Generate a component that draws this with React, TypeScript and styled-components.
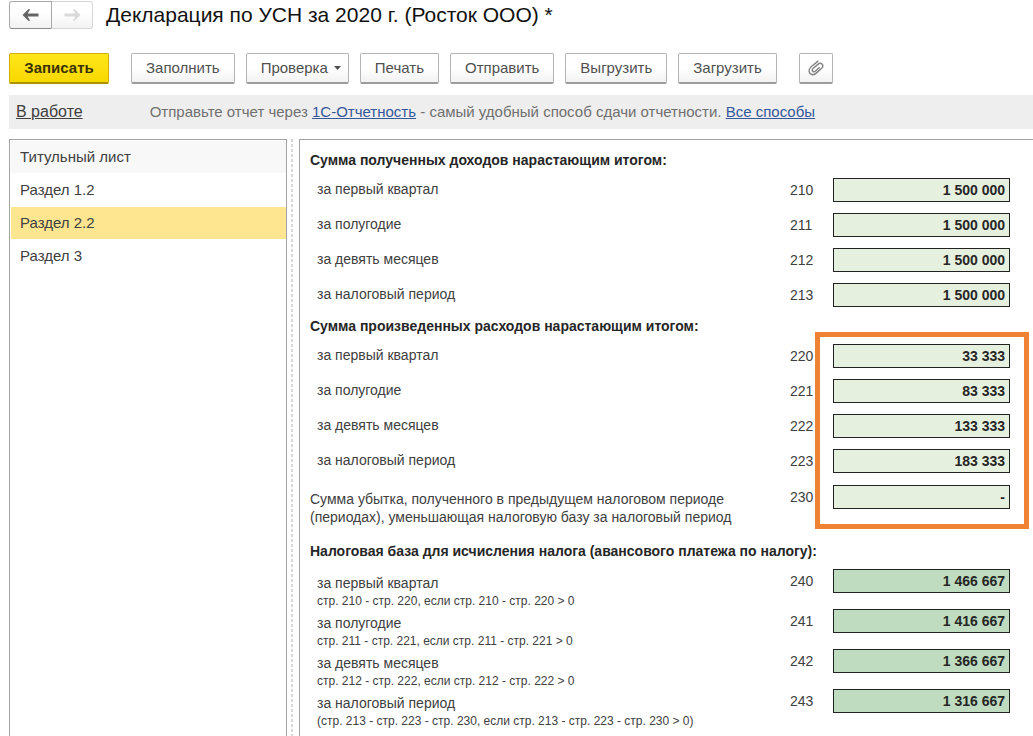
import React from 'react';
import styled, { createGlobalStyle, css } from 'styled-components';

const GlobalStyle = createGlobalStyle`
  * {
    box-sizing: border-box;
  }
  body {
    margin: 0;
    background: #fff;
    color: #404040;
    font-family: "Liberation Sans", Arial, sans-serif;
    font-size: 14px;
  }
  button,
  input {
    font-family: inherit;
  }
`;

const Page = styled.div`
  display: flex;
  flex-direction: column;
  min-height: 100vh;
  padding-left: 9px;
`;

const Header = styled.header`
  display: flex;
  align-items: center;
  gap: 13px;
  height: 30px;
`;

const History = styled.div`
  display: flex;
`;

const HistoryButton = styled.button<{ $side: 'left' | 'right' }>`
  display: flex;
  align-items: center;
  justify-content: center;
  width: ${(p) => (p.$side === 'left' ? 43 : 41)}px;
  height: 28px;
  padding: 0;
  border: 1px solid #a8a8a8;
  border-bottom-color: #8e8e8e;
  border-radius: 3px 0 0 3px;
  background: linear-gradient(#fff 40%, #f2f2f2);
  color: #666;
  ${(p) =>
    p.$side === 'right' &&
    css`
      border-color: #d6d6d6;
      border-left: 0;
      border-radius: 0 3px 3px 0;
      color: #dadada;
    `}
`;

const Title = styled.h1`
  margin: 0;
  color: #111;
  font-size: 21px;
  font-weight: 400;
  line-height: 28px;
`;

const Toolbar = styled.div`
  display: flex;
  gap: 22px;
  padding-top: 23px;
`;

const ButtonGroup = styled.div`
  display: flex;
  gap: 11px;
`;

const ToolButton = styled.button<{ $primary?: boolean; $menu?: boolean }>`
  display: flex;
  align-items: center;
  justify-content: center;
  gap: 6px;
  height: 31px;
  padding: 0 ${(p) => (p.$menu ? 7 : 14)}px 0 14px;
  border: 1px solid #b4b4b4;
  border-bottom: 2px solid #9c9c9c;
  border-radius: 2px;
  background: linear-gradient(#fff 50%, #f2f2f2);
  color: #505050;
  font-size: 15px;
  line-height: 18px;
  ${(p) =>
    p.$primary &&
    css`
      min-width: 100px;
      border-color: #d0b000;
      border-bottom-color: #ac9200;
      background: linear-gradient(#ffe61a, #f8d800);
      color: #3a3300;
      font-weight: 700;
    `}
`;

const AttachButton = styled(ToolButton)`
  width: 34px;
  padding: 0;
`;

const StatusBar = styled.div`
  display: flex;
  align-items: center;
  gap: 67px;
  height: 34px;
  margin-top: 11px;
  padding: 0 0 1px 7px;
  background: #eee;
`;

const StatusLink = styled.a`
  color: #404040;
  font-size: 16px;
`;

const Notice = styled.p`
  margin: 0;
  color: #707070;
  font-size: 15px;
`;

const NoticeLink = styled.a`
  color: #35589a;
`;

const Workspace = styled.div`
  display: flex;
  flex: 1;
  margin-top: 10px;
`;

const Sections = styled.nav`
  flex: none;
  width: 278px;
  padding: 1px 0 0 1px;
  border: 1px solid #a3a3a3;
  border-bottom: 0;
`;

const SectionButton = styled.button<{ $tone?: 'plain' | 'first' | 'active' }>`
  display: block;
  width: 100%;
  height: 33px;
  padding: 0 9px 1px;
  border: 0;
  border-bottom: 1px solid #fff;
  background: ${(p) =>
    p.$tone === 'active' ? '#fee590' : p.$tone === 'first' ? '#f8f8f8' : '#fff'};
  color: #404040;
  font-size: 15px;
  text-align: left;
`;

const Splitter = styled.div`
  flex: none;
  width: 12px;
  padding-left: 4px;

  &::before {
    content: '';
    display: block;
    width: 2px;
    height: 100%;
    background: repeating-linear-gradient(#d8d8d8 0 3px, #fff 3px 5px);
  }
`;

const Form = styled.main`
  flex: 1;
  min-width: 0;
  padding: 10px 23px 0 10px;
  border-top: 1px solid #a3a3a3;
  border-left: 1px solid #a3a3a3;
`;

const Heading = styled.h2`
  margin: 0 0 8px;
  color: #262626;
  font-size: 14px;
  font-weight: 700;
  line-height: 20px;
`;

const Rows = styled.div<{ $space: number }>`
  position: relative;
  display: flex;
  flex-direction: column;
  gap: 11px;
  margin-bottom: ${(p) => p.$space}px;
`;

const Highlight = styled.div`
  position: absolute;
  top: -12px;
  right: -19px;
  bottom: -2px;
  width: 214px;
  border: 5px solid #f08333;
  pointer-events: none;
`;

const Row = styled.div<{ $tall?: boolean }>`
  display: grid;
  grid-template-columns: 1fr 23px 177px;
  column-gap: 20px;
  height: ${(p) => (p.$tall ? 29 : 24)}px;
`;

const LossRow = styled(Row)`
  height: 42px;
  margin-top: 1px;
`;

const Label = styled.label<{ $drop?: boolean; $wide?: boolean }>`
  padding-top: ${(p) => (p.$drop ? 5 : 2)}px;
  padding-left: ${(p) => (p.$wide ? 0 : 7)}px;
  line-height: 18px;
  white-space: nowrap;
`;

const Formula = styled.small`
  display: block;
  font-size: 12px;
  line-height: 18px;
`;

const Code = styled.span`
  padding-top: 3px;
  line-height: 18px;
`;

const Amount = styled.input<{ $total?: boolean }>`
  width: 100%;
  height: 24px;
  padding: 0 4px;
  border: 1px solid #222;
  border-radius: 0;
  background: ${(p) => (p.$total ? '#bfdcc0' : '#e6f0de')};
  color: #262626;
  font-size: 14px;
  font-weight: 700;
  text-align: right;
`;

const Arrow = ({ back }: { back?: boolean }) => (
  <svg width="17" height="12" viewBox="0 0 17 12" fill="currentColor" aria-hidden="true">
    {back ? (
      <path d="M.5 6 6.300.3 8.200.3 5.700 4.600H16.500v2.800H5.700l2.500 4.300H6.300z" />
    ) : (
      <path d="M16.500 6 10.700.3H8.800l2.500 4.300H.5v2.800h10.800l-2.500 4.300h1.900z" />
    )}
  </svg>
);

const Caret = () => (
  <svg width="7" height="4" viewBox="0 0 7 4" aria-hidden="true">
    <path d="M0 0h7L3.500 4z" fill="#505050" />
  </svg>
);

const Clip = () => (
  <svg width="16" height="16" viewBox="0 0 16 16" fill="none" stroke="#858585" strokeWidth="1.5" strokeLinecap="round" aria-hidden="true">
    <path d="M9.800 1.300 3.400 6.500C.8 8.700.7 11.700 2 13.300c1.400 1.600 4 1.700 6.200-.2l4.900-4.300c1.800-1.600 2.100-3.300 1-4.600-1-1.200-2.700-1.100-4.200.2L5.300 8.300c-1.200 1-1.300 2.200-.6 2.900.6.800 1.700.7 2.800-.2l3.700-3.200" />
  </svg>
);

type Line = { code: string; label: string; value: string; formula?: string };

const income: Line[] = [
  { code: '210', label: 'за первый квартал', value: '1 500 000' },
  { code: '211', label: 'за полугодие', value: '1 500 000' },
  { code: '212', label: 'за девять месяцев', value: '1 500 000' },
  { code: '213', label: 'за налоговый период', value: '1 500 000' },
];

const expenses: Line[] = [
  { code: '220', label: 'за первый квартал', value: '33 333' },
  { code: '221', label: 'за полугодие', value: '83 333' },
  { code: '222', label: 'за девять месяцев', value: '133 333' },
  { code: '223', label: 'за налоговый период', value: '183 333' },
];

const taxBase: Line[] = [
  { code: '240', label: 'за первый квартал', value: '1 466 667', formula: 'стр. 210 - стр. 220, если стр. 210 - стр. 220 > 0' },
  { code: '241', label: 'за полугодие', value: '1 416 667', formula: 'стр. 211 - стр. 221, если стр. 211 - стр. 221 > 0' },
  { code: '242', label: 'за девять месяцев', value: '1 366 667', formula: 'стр. 212 - стр. 222, если стр. 212 - стр. 222 > 0' },
  { code: '243', label: 'за налоговый период', value: '1 316 667', formula: '(стр. 213 - стр. 223 - стр. 230, если стр. 213 - стр. 223 - стр. 230 > 0)' },
];

const FormLine = ({ code, label, value, formula }: Line) => (
  <Row $tall={!!formula}>
    <Label htmlFor={`line-${code}`} $drop={!!formula}>
      {label}
      {formula && <Formula>{formula}</Formula>}
    </Label>
    <Code>{code}</Code>
    <Amount id={`line-${code}`} defaultValue={value} $total={!!formula} />
  </Row>
);

export default function App() {
  return (
    <>
      <GlobalStyle />
      <Page>
        <Header>
          <History>
            <HistoryButton $side="left" type="button" aria-label="Назад">
              <Arrow back />
            </HistoryButton>
            <HistoryButton $side="right" type="button" aria-label="Вперед" disabled>
              <Arrow />
            </HistoryButton>
          </History>
          <Title>Декларация по УСН за 2020 г. (Росток ООО) *</Title>
        </Header>

        <Toolbar>
          <ToolButton type="button" $primary>Записать</ToolButton>
          <ButtonGroup>
            <ToolButton type="button">Заполнить</ToolButton>
            <ToolButton type="button" $menu>
              Проверка
              <Caret />
            </ToolButton>
            <ToolButton type="button">Печать</ToolButton>
            <ToolButton type="button">Отправить</ToolButton>
            <ToolButton type="button">Выгрузить</ToolButton>
            <ToolButton type="button">Загрузить</ToolButton>
          </ButtonGroup>
          <AttachButton type="button" aria-label="Вложения">
            <Clip />
          </AttachButton>
        </Toolbar>

        <StatusBar>
          <StatusLink href="#status">В работе</StatusLink>
          <Notice>
            Отправьте отчет через <NoticeLink href="#reporting">1С-Отчетность</NoticeLink> - самый удобный способ сдачи
            отчетности. <NoticeLink href="#ways">Все способы</NoticeLink>
          </Notice>
        </StatusBar>

        <Workspace>
          <Sections>
            <SectionButton type="button" $tone="first">Титульный лист</SectionButton>
            <SectionButton type="button">Раздел 1.2</SectionButton>
            <SectionButton type="button" $tone="active" aria-current="page">Раздел 2.2</SectionButton>
            <SectionButton type="button">Раздел 3</SectionButton>
          </Sections>
          <Splitter />
          <Form>
            <Heading>Сумма полученных доходов нарастающим итогом:</Heading>
            <Rows $space={9}>
              {income.map((line) => (
                <FormLine key={line.code} {...line} />
              ))}
            </Rows>

            <Heading>Сумма произведенных расходов нарастающим итогом:</Heading>
            <Rows $space={14}>
              {expenses.map((line) => (
                <FormLine key={line.code} {...line} />
              ))}
              <LossRow>
                <Label htmlFor="line-230" $drop $wide>
                  Сумма убытка, полученного в предыдущем налоговом периоде
                  <br />
                  (периодах), уменьшающая налоговую базу за налоговый период
                </Label>
                <Code>230</Code>
                <Amount id="line-230" defaultValue="-" />
              </LossRow>
              <Highlight />
            </Rows>

            <Heading>Налоговая база для исчисления налога (авансового платежа по налогу):</Heading>
            <Rows $space={0}>
              {taxBase.map((line) => (
                <FormLine key={line.code} {...line} />
              ))}
            </Rows>
          </Form>
        </Workspace>
      </Page>
    </>
  );
}
